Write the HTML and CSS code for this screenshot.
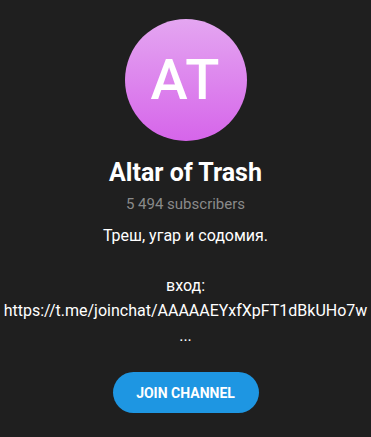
FILE: index.html
```html
<!DOCTYPE html>
<html lang="en">
<head>
    <meta charset="UTF-8">
    <meta name="viewport" content="width=device-width, initial-scale=1.0">
    <title>Altar of Trash</title>
    <link rel="stylesheet" href="styles.css">
</head>
<body>
    <div class="channel">
        <div class="avatar">AT</div>
        <h1 class="title">Altar of Trash</h1>
        <div class="subscribers">5 494 subscribers</div>
        <div class="description">
            Треш, угар и содомия.<br><br>вход:<br>https://t.me/joinchat/AAAAAEYxfXpFT1dBkUHo7w<br>...
        </div>
        <button class="join-btn">Join channel</button>
    </div>
</body>
</html>
```

FILE: styles.css
```css
body {
    margin: 0;
    background-color: #1f1f1f;
    font-family: Roboto, "Liberation Sans", sans-serif;
    color: #fff;
}

.channel {
    display: flex;
    flex-direction: column;
    align-items: center;
    padding-top: 19px;
    text-align: center;
}

.avatar {
    width: 122px;
    height: 122px;
    border-radius: 50%;
    background: linear-gradient(#e4a6f1, #d665ea);
    display: flex;
    align-items: center;
    justify-content: center;
    font-size: 56px;
    font-weight: 500;
    letter-spacing: 1px;
}

.title {
    margin: 16px 0 0;
    font-size: 25px;
    font-weight: 700;
    line-height: 32px;
}

.subscribers {
    margin-top: 5px;
    font-size: 15px;
    line-height: 20px;
    color: #8a8a8a;
}

.description {
    margin-top: 9px;
    font-size: 16px;
    line-height: 25px;
    overflow-wrap: break-word;
}

.join-btn {
    margin-top: 24px;
    width: 146px;
    height: 41px;
    border: none;
    border-radius: 21px;
    background-color: #1e96e2;
    color: #fff;
    font-family: inherit;
    font-size: 14px;
    font-weight: 700;
    text-transform: uppercase;
    cursor: pointer;
}
```
